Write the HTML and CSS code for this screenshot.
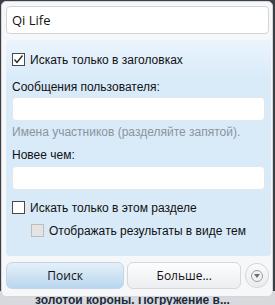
FILE: index.html
```html
<!DOCTYPE html>
<html lang="ru">
<head>
  <meta charset="UTF-8">
  <title>Поиск</title>
  <link rel="stylesheet" href="styles.css">
</head>
<body>
  <div class="page-behind">золотой короны. Погружение в...</div>

  <div class="popup">
    <input class="query" type="text" value="Qi Life">

    <div class="options">
      <label class="check">
        <span class="box">
          <svg width="11" height="11" viewBox="0 0 11 11"><polyline points="1.5,5.5 4,8.5 9.5,1.5" fill="none" stroke="#222" stroke-width="1.3"/></svg>
        </span>
        Искать только в заголовках
      </label>

      <div class="field-label">Сообщения пользователя:</div>
      <input class="field" type="text">
      <div class="hint">Имена участников (разделяйте запятой).</div>

      <div class="field-label">Новее чем:</div>
      <input class="field" type="text">

      <label class="check"><span class="box"></span> Искать только в этом разделе</label>
      <label class="check sub"><span class="box disabled"></span> Отображать результаты в виде тем</label>
    </div>

    <div class="buttons">
      <button class="btn primary">Поиск</button>
      <button class="btn">Больше...</button>
      <button class="more-toggle">
        <span class="arrow"></span>
      </button>
    </div>
  </div>
</body>
</html>
```

FILE: styles.css
```css
* {
  margin: 0;
  padding: 0;
  box-sizing: border-box;
}

body {
  width: 275px;
  height: 305px;
  background-color: #3b4047;
  font-family: 'Liberation Sans', Arial, sans-serif;
  font-size: 12px;
  color: #111;
  position: relative;
  overflow: hidden;
}

.page-behind {
  position: absolute;
  left: 0;
  top: 291px;
  width: 275px;
  height: 14px;
  padding: 2px 0 0 35px;
  background-color: #d7d9dc;
  color: #1d2a3c;
  font-weight: bold;
  font-size: 12px;
  line-height: 14px;
  white-space: nowrap;
}

.popup {
  position: absolute;
  left: 1px;
  top: 1px;
  width: 272px;
  height: 296px;
  background-color: #f6f7f9;
  border: 1px solid #d4d6da;
  border-radius: 5px;
  padding: 4px 3px 0 4px;
}

.query {
  display: block;
  width: 263px;
  height: 28px;
  border: 1px solid #d2d4d8;
  border-radius: 4px;
  background-color: #fff;
  padding: 0 5px;
  font-family: 'Open Sans', 'Noto Sans', sans-serif;
  font-size: 13px;
  color: #111;
}

.options {
  margin-top: 6px;
  width: 265px;
  height: 216px;
  border-radius: 4px;
  background: linear-gradient(to bottom, #eaf4fd 0%, #d9ebf9 18%, #d8eaf8 100%);
  padding: 11px 5px 0 6px;
}

.check {
  display: flex;
  align-items: center;
  gap: 5px;
  height: 17px;
}

.check.sub {
  margin-top: 6px;
  padding-left: 19px;
}

.check + .field-label {
  margin-top: 12px;
}

.field + .check {
  margin-top: 9px;
}

.box {
  display: flex;
  align-items: center;
  justify-content: center;
  width: 13px;
  height: 13px;
  border: 1px solid #4a4a4a;
  background-color: #fff;
  flex-shrink: 0;
}

.box.disabled {
  border-color: #bdbdbd;
  background-color: #e4e4e4;
}

.field-label {
  height: 15px;
  line-height: 15px;
}

.hint + .field-label {
  margin-top: 8px;
}

.field {
  display: block;
  width: 253px;
  height: 24px;
  border: 1px solid #e2e7ec;
  border-radius: 4px;
  background-color: #fff;
}

.field-label + .field {
  margin-top: 2px;
}

.hint + .field-label + .field {
  margin-top: 3px;
}

.hint {
  margin-top: 4px;
  height: 15px;
  line-height: 15px;
  color: #8c949c;
}

.buttons {
  display: flex;
  align-items: center;
  gap: 3px;
  margin-top: 6px;
}

.btn {
  height: 27px;
  width: 120px;
  border: 1px solid #d4d7dc;
  border-radius: 6px;
  background: linear-gradient(to bottom, #fdfdfe 0%, #eceef1 100%);
  font-family: 'Open Sans', 'Noto Sans', sans-serif;
  font-size: 12px;
  color: #111;
}

.btn.primary {
  border-color: #c4d6e6;
  background: linear-gradient(to bottom, #e5f0f9 0%, #b9d6ee 100%);
}

.btn + .btn {
  width: 116px;
}

.more-toggle {
  margin-left: 1px;
  width: 24px;
  height: 25px;
  border: 1px solid #d4d7dc;
  border-radius: 50%;
  background: linear-gradient(to bottom, #fbfbfc, #eaebee);
  display: flex;
  align-items: center;
  justify-content: center;
}

.arrow {
  width: 12px;
  height: 12px;
  border-radius: 50%;
  border: 1px solid #9a9ea4;
  background-color: #f2f2f4;
  position: relative;
}

.arrow::after {
  content: '';
  position: absolute;
  left: 2px;
  top: 3px;
  border-left: 3px solid transparent;
  border-right: 3px solid transparent;
  border-top: 4px solid #6b6f75;
}
```
